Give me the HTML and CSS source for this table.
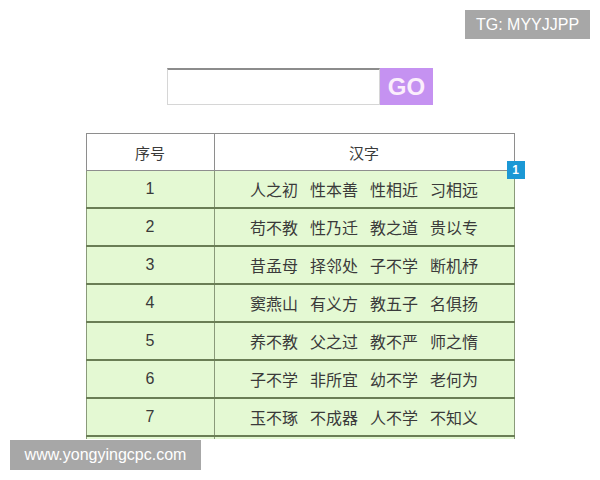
FILE: index.html
```html
<!DOCTYPE html>
<html lang="zh">
<head>
<meta charset="utf-8">
<title>三字经</title>
<link rel="stylesheet" href="styles.css">
</head>
<body>
<div class="page">
  <div class="search">
    <div class="search-input"></div>
    <div class="search-go">GO</div>
  </div>
  <div class="table-wrap">
    <div class="table-clip">
      <table class="grid">
        <thead>
          <tr><th class="c-num">序号</th><th class="c-txt">汉字</th></tr>
        </thead>
        <tbody>
          <tr><td class="c-num">1</td><td class="c-txt"><span>人之初</span><span>性本善</span><span>性相近</span><span>习相远</span></td></tr>
          <tr><td class="c-num">2</td><td class="c-txt"><span>苟不教</span><span>性乃迁</span><span>教之道</span><span>贵以专</span></td></tr>
          <tr><td class="c-num">3</td><td class="c-txt"><span>昔孟母</span><span>择邻处</span><span>子不学</span><span>断机杼</span></td></tr>
          <tr><td class="c-num">4</td><td class="c-txt"><span>窦燕山</span><span>有义方</span><span>教五子</span><span>名俱扬</span></td></tr>
          <tr><td class="c-num">5</td><td class="c-txt"><span>养不教</span><span>父之过</span><span>教不严</span><span>师之惰</span></td></tr>
          <tr><td class="c-num">6</td><td class="c-txt"><span>子不学</span><span>非所宜</span><span>幼不学</span><span>老何为</span></td></tr>
          <tr><td class="c-num">7</td><td class="c-txt"><span>玉不琢</span><span>不成器</span><span>人不学</span><span>不知义</span></td></tr>
          <tr><td class="c-num"></td><td class="c-txt"></td></tr>
        </tbody>
      </table>
    </div>
    <div class="badge">1</div>
  </div>
</div>
<div class="tg">TG: MYYJJPP</div>
<div class="site">www.yongyingcpc.com</div>
</body>
</html>
```

FILE: styles.css
```css
html, body {
  margin: 0;
  padding: 0;
}
body {
  width: 600px;
  height: 480px;
  overflow: hidden;
  background: #ffffff;
  position: relative;
  font-family: "Liberation Sans", "Noto Sans CJK SC", sans-serif;
}
.page {
  display: flex;
  flex-direction: column;
  align-items: center;
  padding-top: 68px;
}
.search {
  display: flex;
  height: 37px;
  width: 266px;
}
.search-input {
  width: 213px;
  box-sizing: border-box;
  border: 1px solid #d6d6d6;
  border-top: 2px solid #8c8c8c;
  background: #fff;
}
.search-go {
  width: 53px;
  background: #c592f1;
  color: #fbeefc;
  font-family: "Liberation Sans", sans-serif;
  font-weight: bold;
  font-size: 24px;
  display: flex;
  align-items: center;
  justify-content: center;
}
.table-wrap {
  position: relative;
  margin-top: 28px;
  width: 429px;
}
.table-clip {
  height: 306px;
  overflow: hidden;
}
.grid {
  border-collapse: collapse;
  width: 429px;
  table-layout: fixed;
  font-family: "Noto Sans CJK SC", sans-serif;
  color: #3a3a3a;
}
.grid th {
  height: 36px;
  font-weight: normal;
  font-size: 15px;
  background: #ffffff;
  border: 1px solid #8e8e8e;
  padding: 0;
}
.grid td {
  height: 36px;
  background: #e4f9d3;
  border-left: 1px solid #8a9a7a;
  border-right: 1px solid #8a9a7a;
  border-bottom: 2px solid #6a7e55;
  padding: 0;
  font-size: 16px;
}
.grid .c-num {
  width: 127px;
  text-align: center;
  font-family: "Liberation Sans", sans-serif;
}
.grid th.c-num {
  font-family: "Noto Sans CJK SC", sans-serif;
}
.grid td.c-txt {
  text-align: center;
  font-size: 16px;
}
.grid td.c-txt span {
  display: inline-block;
  margin: 0 6px;
}
.grid tbody tr:first-child td {
  border-top: 1px solid #8e8e8e;
}
.badge {
  position: absolute;
  right: -10px;
  top: 28px;
  width: 18px;
  height: 18px;
  background: #1b98d5;
  color: #ffffff;
  font-family: "Liberation Sans", sans-serif;
  font-weight: bold;
  font-size: 12px;
  display: flex;
  align-items: center;
  justify-content: center;
}
.tg {
  position: absolute;
  top: 10px;
  left: 465px;
  width: 125px;
  height: 29px;
  background: #a7a7a7;
  color: #ffffff;
  font-size: 16px;
  display: flex;
  align-items: center;
  justify-content: center;
}
.site {
  position: absolute;
  top: 440px;
  left: 10px;
  width: 191px;
  height: 30px;
  background: #a7a7a7;
  color: #ffffff;
  font-size: 16px;
  display: flex;
  align-items: center;
  justify-content: center;
}
```
